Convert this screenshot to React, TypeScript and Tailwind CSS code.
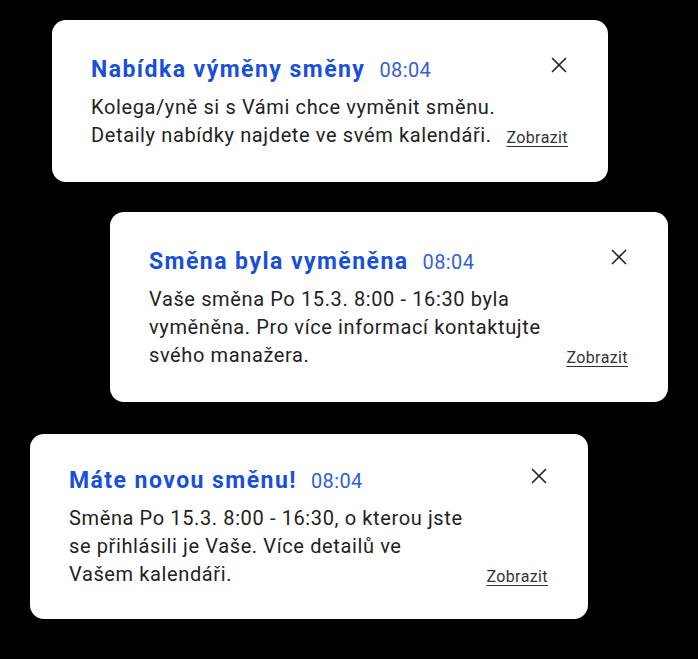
import React from "react";

type Note = { title: string; lines: string[]; box: string };

const notes: Note[] = [
  {
    title: "Nabídka výměny směny",
    lines: ["Kolega/yně si s Vámi chce vyměnit směnu.", "Detaily nabídky najdete ve svém kalendáři."],
    box: "ml-[52px] mt-[20px] w-[556px] pt-[36px] pb-[33px]",
  },
  {
    title: "Směna byla vyměněna",
    lines: ["Vaše směna Po 15.3. 8:00 - 16:30 byla", "vyměněna. Pro více informací kontaktujte", "svého manažera."],
    box: "ml-[110px] mt-[30px] w-[558px] pt-[36px] pb-[33px]",
  },
  {
    title: "Máte novou směnu!",
    lines: ["Směna Po 15.3. 8:00 - 16:30, o kterou jste", "se přihlásili je Vaše. Více detailů ve", "Vašem kalendáři."],
    box: "ml-[30px] mt-[32px] w-[558px] pt-[33px] pb-[31px]",
  },
];

function CloseIcon() {
  return (
    <svg width="16" height="16" viewBox="0 0 16 16" fill="none" stroke="#2a2a2a" strokeWidth="1.7" strokeLinecap="round">
      <line x1="1.5" y1="1.5" x2="14.5" y2="14.5" />
      <line x1="14.5" y1="1.5" x2="1.5" y2="14.5" />
    </svg>
  );
}

function Card({ n }: { n: Note }) {
  return (
    <div className={`${n.box} bg-white rounded-[14px] pl-[39px] pr-[41px]`}>
      <div className="flex items-start justify-between h-[28px]">
        <div className="flex items-center h-[28px]">
          <span className="text-[23px] leading-[28px] font-bold tracking-[1.45px] text-[#1a4fd8]">{n.title}</span>
          <span className="ml-[14px] text-[20px] leading-[28px] tracking-[0.4px] text-[#3461d1]">08:04</span>
        </div>
        <div className="mt-[1px] w-[16px] h-[16px]">
          <CloseIcon />
        </div>
      </div>
      <div className="mt-[9px] flex items-end justify-between">
        <p className="text-[20px] leading-[28px] tracking-[0.62px] text-[#222222] whitespace-nowrap">
          {n.lines.map((l, i) => (
            <span key={i} className="block">
              {l}
            </span>
          ))}
        </p>
        <span className="text-[16px] leading-[20px] tracking-[0.4px] text-[#333333] underline underline-offset-[3px] mb-[1px] -mr-[1px]">Zobrazit</span>
      </div>
    </div>
  );
}

export default function App() {
  return (
    <div className="w-[698px] h-[659px] bg-black overflow-hidden flex flex-col" style={{ fontFamily: "Roboto, 'Noto Sans', sans-serif" }}>
      {notes.map((n, i) => (
        <Card key={i} n={n} />
      ))}
    </div>
  );
}
